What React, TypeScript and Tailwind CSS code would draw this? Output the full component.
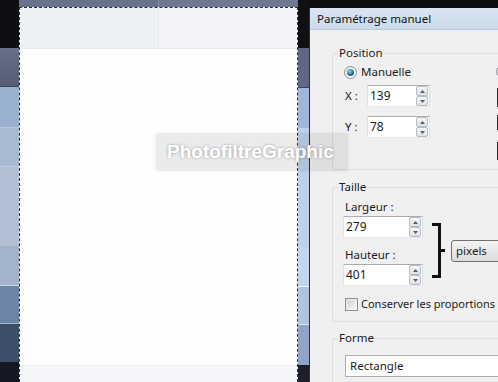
import React from "react";

function Spinner() {
  return (
    <div className="flex flex-col w-[12px] h-[20px] mr-[1px]">
      <div className="flex-1 flex items-center justify-center border border-[#b8bcc4] rounded-[2px] bg-gradient-to-b from-[#f6f6f6] to-[#dfe1e5]">
        <svg width="5" height="3" viewBox="0 0 5 3">
          <polygon points="0,3 2.5,0 5,3" fill="#55606e" />
        </svg>
      </div>
      <div className="flex-1 flex items-center justify-center border border-[#b8bcc4] rounded-[2px] bg-gradient-to-b from-[#f6f6f6] to-[#dfe1e5]">
        <svg width="5" height="3" viewBox="0 0 5 3">
          <polygon points="0,0 5,0 2.5,3" fill="#55606e" />
        </svg>
      </div>
    </div>
  );
}

function NumInput({ value, w }: { value: string; w: string }) {
  return (
    <div
      className={`${w} h-[22px] shrink-0 flex items-center justify-between bg-white border border-t-[#abadb3] border-l-[#e2e3ea] border-r-[#dbdfe6] border-b-[#e3e9ef]`}
    >
      <span className="pl-[2px] text-[12px] leading-[16px]">{value}</span>
      <Spinner />
    </div>
  );
}

function Radio({ checked }: { checked: boolean }) {
  return (
    <div className="w-[13px] h-[13px] shrink-0 rounded-full border border-[#8a8f98] bg-gradient-to-br from-[#e6e6e6] to-[#ffffff] flex items-center justify-center">
      {checked && (
        <div className="w-[7px] h-[7px] rounded-full bg-[radial-gradient(circle_at_40%_35%,#9fdcf5,#1d6f98_55%,#0c3f5c)]" />
      )}
    </div>
  );
}

export default function App() {
  return (
    <div className="relative w-[498px] h-[382px] overflow-hidden flex font-['Noto_Sans',sans-serif] text-[11px] text-[#1b1b1b]">
      {/* left strip */}
      <div className="w-[19px] shrink-0 flex flex-col">
        <div className="h-[48px] shrink-0 bg-[#0e0f12]" />
        <div className="h-[39px] shrink-0 bg-gradient-to-b from-[#676f84] to-[#555e74] border-b border-[#3a4255]" />
        <div className="h-[40px] shrink-0 bg-[#9ab1cf]" />
        <div className="h-[39px] shrink-0 bg-[#a8b9d2] border-t border-[#b9c7da]" />
        <div className="h-[80px] shrink-0 bg-[#b1c0d5] border-t border-[#c2cedf]" />
        <div className="h-[40px] shrink-0 bg-[#a2b3cb] border-b border-[#cad5e3]" />
        <div className="h-[38px] shrink-0 bg-[#6c85a6] border-b border-[#a8b8cc]" />
        <div className="h-[38px] shrink-0 bg-[#3d4e69]" />
        <div className="flex-1 bg-[#161924]" />
      </div>

      {/* canvas */}
      <div className="w-[279px] shrink-0 flex flex-col">
        <div className="h-[7px] shrink-0 flex">
          <div className="w-[139px] bg-[#68728b]" />
          <div className="w-[1px] bg-[#8690a6]" />
          <div className="flex-1 bg-[#6e7891]" />
        </div>
        <div className="flex-1 flex flex-col bg-white border-l border-r border-t border-dashed border-[#2a2d33]">
          <div className="h-[41px] shrink-0 flex border-b border-[#e8ebf0]">
            <div className="w-[138px] bg-[#edf0f5]" />
            <div className="w-[1px] bg-[#e4e8ee]" />
            <div className="flex-1 bg-[#f2f4f8]" />
          </div>
          <div className="flex-1 bg-[#fdfdfe]" />
          <div className="h-[17px] shrink-0 bg-[#f5f6f9] border-t border-[#eef0f4]" />
        </div>
      </div>

      {/* right strip */}
      <div className="w-[11px] shrink-0 flex flex-col">
        <div className="h-[48px] shrink-0 bg-[#111114]" />
        <div className="h-[40px] shrink-0 bg-[#5d6883] border-b border-[#3c4459]" />
        <div className="h-[40px] shrink-0 bg-[#a0b7d9]" />
        <div className="h-[119px] shrink-0 bg-[#bfd1ea]" />
        <div className="h-[40px] shrink-0 bg-[#c3d4ec] border-b border-[#eef3fa]" />
        <div className="h-[38px] shrink-0 bg-[#b0c3e0] border-b border-[#dfe7f3]" />
        <div className="h-[40px] shrink-0 bg-[#8fa4c6]" />
        <div className="flex-1 bg-[#1d202c]" />
      </div>

      {/* dialog */}
      <div className="w-[300px] shrink-0 flex flex-col">
        <div className="h-[8px] shrink-0 bg-[#0f0f12]" />
        <div className="flex-1 min-h-0 overflow-hidden flex flex-col border-l border-[#2b2f3a] bg-[#f0f0f0]">
          <div className="h-[22px] shrink-0 flex items-center pl-[7px] bg-gradient-to-b from-[#d9e5f1] to-[#ccdbeb] border-b border-[#b7c8db] text-[11.5px] text-[#111]">
            Paramétrage manuel
          </div>
          <div className="pl-[22px] flex flex-col shrink-0">
            {/* Position */}
            <fieldset className="mt-[15px] w-[280px] border border-[#d5dfe5] rounded-[3px]">
              <legend className="ml-[5px] px-[1px] leading-[16px] text-[11.5px]">Position</legend>
              <div className="pl-[11px] pb-[9px] flex">
                <div className="flex flex-col w-[86px] shrink-0">
                  <div className="mt-[3px] h-[16px] flex items-center gap-[4px]">
                    <Radio checked />
                    <span className="text-[11.5px] leading-[16px]">Manuelle</span>
                  </div>
                  <div className="mt-[5px] flex items-center">
                    <span className="w-[23px] pl-[1px] text-[11.5px]">X :</span>
                    <NumInput value="139" w="w-[63px]" />
                  </div>
                  <div className="mt-[9px] flex items-center">
                    <span className="w-[23px] pl-[1px] text-[11.5px]">Y :</span>
                    <NumInput value="78" w="w-[63px]" />
                  </div>
                </div>
                <div className="ml-[66px] flex flex-col">
                  <div className="mt-[4px]">
                    <Radio checked={false} />
                  </div>
                  <div className="ml-[1px] mt-[10px] w-[2px] h-[19px] bg-[#2a2a2a]" />
                  <div className="ml-[1px] mt-[8px] w-[2px] h-[15px] bg-[#2a2a2a]" />
                  <div className="ml-[1px] mt-[12px] w-[2px] h-[18px] bg-[#2a2a2a]" />
                </div>
              </div>
            </fieldset>

            {/* Taille */}
            <fieldset className="mt-[9px] w-[280px] border border-[#d5dfe5] rounded-[3px]">
              <legend className="ml-[5px] px-[1px] leading-[16px] text-[11.5px]">Taille</legend>
              <div className="pl-[10px] pb-[9px] flex flex-col">
                <div className="flex items-start">
                  <div className="w-[80px] flex flex-col">
                    <span className="mt-[4px] h-[16px] leading-[16px] pl-[2px] text-[11.5px]">Largeur :</span>
                    <div className="mt-[1px]">
                      <NumInput value="279" w="w-[80px]" />
                    </div>
                    <span className="mt-[9px] h-[16px] leading-[16px] pl-[2px] text-[11.5px]">Hauteur :</span>
                    <div className="mt-[1px]">
                      <NumInput value="401" w="w-[80px]" />
                    </div>
                  </div>
                  <svg className="ml-[7px] mt-[28px] shrink-0" width="16" height="55" viewBox="0 0 16 55">
                    <rect x="2" y="0" width="9" height="3" fill="#111" />
                    <rect x="8" y="0" width="3" height="55" fill="#111" />
                    <rect x="2" y="52" width="9" height="3" fill="#111" />
                    <rect x="11" y="26" width="4" height="3" fill="#111" />
                  </svg>
                  <div className="ml-[5px] mt-[45px] w-[100px] h-[22px] flex items-center pl-[4px] rounded-[3px] border border-[#707070] bg-gradient-to-b from-[#f3f3f3] to-[#dcdcdc] text-[11.5px]">
                    pixels
                  </div>
                </div>
                <div className="mt-[10px] h-[16px] flex items-center">
                  <div className="ml-[2px] w-[13px] h-[13px] shrink-0 border border-[#8f8f8f] bg-gradient-to-br from-[#dcdcdc] to-[#fbfbfb] p-[2px]">
                    <div className="w-full h-full bg-gradient-to-br from-[#cfcfcf] to-[#f4f4f4]" />
                  </div>
                  <span className="ml-[3px] text-[11px] leading-[16px] whitespace-nowrap">Conserver les proportions</span>
                </div>
              </div>
            </fieldset>

            {/* Forme */}
            <fieldset className="mt-[8px] w-[280px] border border-[#d5dfe5] rounded-[3px]">
              <legend className="ml-[5px] px-[1px] leading-[16px] text-[11.5px]">Forme</legend>
              <div className="pl-[12px] pb-[10px]">
                <div className="mt-[9px] w-[200px] h-[22px] flex items-center pl-[4px] bg-white border border-[#abadb3] text-[11.5px]">
                  Rectangle
                </div>
              </div>
            </fieldset>
          </div>
        </div>
      </div>

      {/* watermark overlay */}
      <div className="absolute left-[156px] top-[133px] w-[192px] h-[38px] flex items-center pl-[11px] bg-black/[0.07] rounded-[2px] shadow-[0_0_4px_rgba(0,0,0,0.06)]">
        <span className="font-['Liberation_Sans',sans-serif] font-bold text-[19px] leading-[22px] text-white [text-shadow:0_0_3px_rgba(0,0,0,0.35)] whitespace-nowrap">
          PhotofiltreGraphic
        </span>
      </div>
    </div>
  );
}
